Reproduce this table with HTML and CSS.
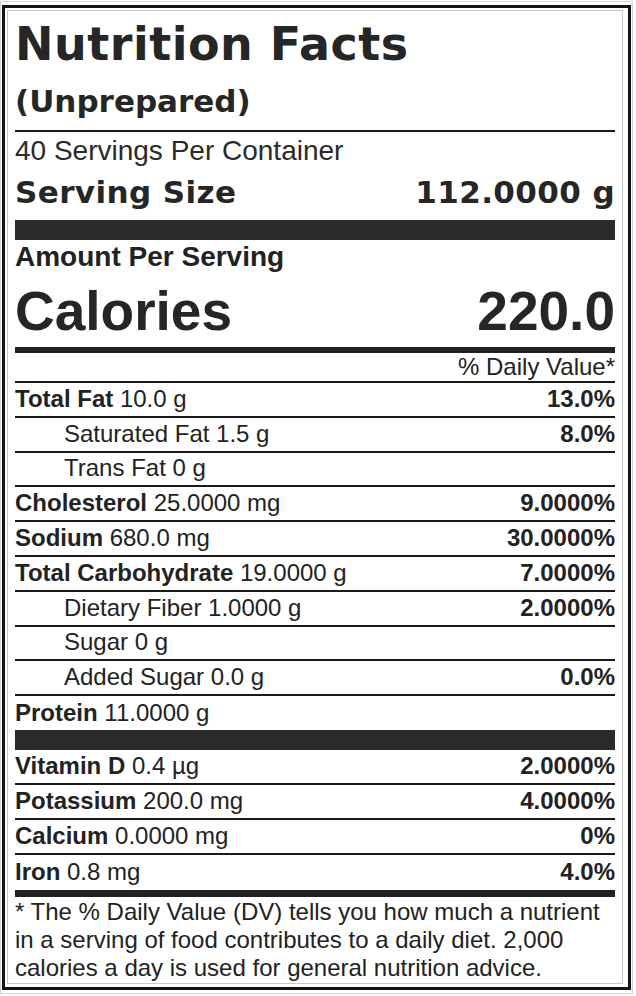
FILE: index.html
```html
<!DOCTYPE html>
<html>
<head>
<meta charset="utf-8">
<link rel="stylesheet" href="styles.css">
</head>
<body>
<div class="page">
  <div class="label">
    <div class="inner">
      <h1 class="title">Nutrition Facts</h1>
      <div class="subtitle">(Unprepared)</div>
      <div class="servings">40 Servings Per Container</div>
      <div class="serving-size"><span>Serving Size</span><span>112.0000 g</span></div>
      <div class="bar-thick"></div>
      <div class="amount">Amount Per Serving</div>
      <div class="calories"><span>Calories</span><span>220.0</span></div>
      <div class="bar-med"></div>
      <div class="dv-head">% Daily Value*</div>

      <div class="row"><span><b>Total Fat</b> 10.0 g</span><b>13.0%</b></div>
      <div class="row sub"><span>Saturated Fat 1.5 g</span><b>8.0%</b></div>
      <div class="row sub"><span>Trans Fat 0 g</span></div>
      <div class="row"><span><b>Cholesterol</b> 25.0000 mg</span><b>9.0000%</b></div>
      <div class="row"><span><b>Sodium</b> 680.0 mg</span><b>30.0000%</b></div>
      <div class="row"><span><b>Total Carbohydrate</b> 19.0000 g</span><b>7.0000%</b></div>
      <div class="row sub"><span>Dietary Fiber 1.0000 g</span><b>2.0000%</b></div>
      <div class="row sub"><span>Sugar 0 g</span></div>
      <div class="row sub"><span>Added Sugar 0.0 g</span><b>0.0%</b></div>
      <div class="row last"><span><b>Protein</b> 11.0000 g</span></div>

      <div class="bar-thick"></div>

      <div class="row"><span><b>Vitamin D</b> 0.4 µg</span><b>2.0000%</b></div>
      <div class="row"><span><b>Potassium</b> 200.0 mg</span><b>4.0000%</b></div>
      <div class="row"><span><b>Calcium</b> 0.0000 mg</span><b>0%</b></div>
      <div class="row last iron"><span><b>Iron</b> 0.8 mg</span><b>4.0%</b></div>

      <div class="bar-foot"></div>
      <p class="footnote">* The % Daily Value (DV) tells you how much a nutrient in a serving of food contributes to a daily diet. 2,000 calories a day is used for general nutrition advice.</p>
    </div>
  </div>
</div>
</body>
</html>
```

FILE: styles.css
```css
html, body {
  margin: 0;
  padding: 0;
  background: #ffffff;
}

body {
  font-family: "Liberation Sans", Arial, sans-serif;
  color: #222222;
}

.page {
  margin-top: 1px;
  width: 633px;
  box-sizing: border-box;
  border: 1px solid #d4d4d4;
  padding: 3px 1px 3px 1px;
}

.label {
  border: 3px solid #141414;
  padding: 2px 5px 3px 2px;
}

.inner {
  border: 1px solid #c9c9c9;
  padding: 8px 7px 1px 7px;
}

.title {
  margin: 0;
  font-family: "DejaVu Sans", sans-serif;
  font-weight: bold;
  font-size: 46px;
  line-height: 50px;
  letter-spacing: 0.5px;
  color: #262626;
}

.subtitle {
  margin-top: 14px;
  font-family: "DejaVu Sans", sans-serif;
  font-weight: bold;
  font-size: 31px;
  line-height: 36px;
  padding-bottom: 11px;
  border-bottom: 2px solid #1a1a1a;
  color: #262626;
}

.servings {
  margin-top: 4px;
  font-size: 28px;
  line-height: 30px;
  color: #2a2a2a;
}

.serving-size {
  margin-top: 8px;
  display: flex;
  justify-content: space-between;
  font-family: "DejaVu Sans", sans-serif;
  font-weight: bold;
  font-size: 31px;
  line-height: 36px;
  letter-spacing: 0.4px;
  color: #262626;
}

.bar-thick {
  height: 20px;
  background: #2a2a2a;
}

.serving-size + .bar-thick {
  margin-top: 10px;
}

.amount {
  margin-top: 2px;
  font-weight: bold;
  font-size: 28px;
  line-height: 30px;
}

.calories {
  margin-top: 11px;
  display: flex;
  justify-content: space-between;
  font-weight: bold;
  font-size: 55px;
  line-height: 56px;
  color: #262626;
}

.bar-med {
  margin-top: 8px;
  height: 6px;
  background: #222222;
}

.dv-head {
  text-align: right;
  font-size: 24px;
  line-height: 28px;
  border-bottom: 2px solid #1a1a1a;
}

.row {
  display: flex;
  justify-content: space-between;
  align-items: center;
  height: 34.8px;
  box-sizing: border-box;
  border-bottom: 2px solid #1a1a1a;
  font-size: 24px;
  line-height: 28px;
  padding-bottom: 1px;
}

.row.sub {
  padding-left: 49px;
}

.row.last {
  border-bottom: none;
  height: 34px;
}

.row.iron {
  height: 35px;
}

.bar-foot {
  height: 7px;
  background: #222222;
}

.footnote {
  margin: 1px 0 0 0;
  font-size: 24px;
  line-height: 28px;
}
```
